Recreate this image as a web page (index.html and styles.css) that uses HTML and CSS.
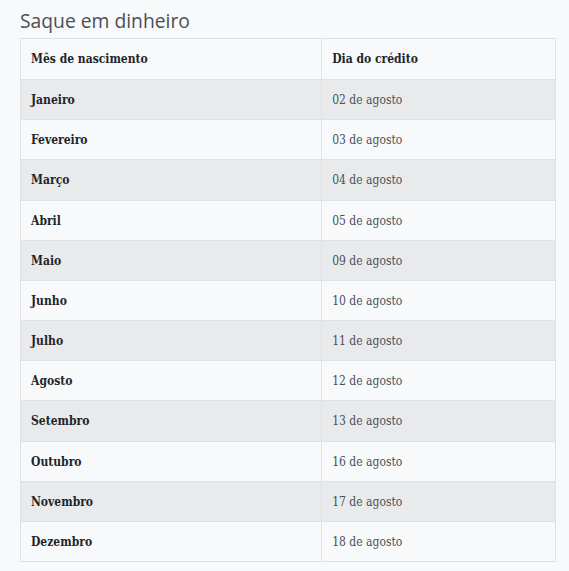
FILE: index.html
```html
<!DOCTYPE html>
<html lang="pt">
<head>
<meta charset="utf-8">
<link rel="stylesheet" href="styles.css">
</head>
<body>
<div class="page">
  <h2 class="title">Saque em dinheiro</h2>
  <table class="tbl">
    <thead>
      <tr><th class="c1">Mês de nascimento</th><th>Dia do crédito</th></tr>
    </thead>
    <tbody>
      <tr><th>Janeiro</th><td>02 de agosto</td></tr>
      <tr><th>Fevereiro</th><td>03 de agosto</td></tr>
      <tr><th>Março</th><td>04 de agosto</td></tr>
      <tr><th>Abril</th><td>05 de agosto</td></tr>
      <tr><th>Maio</th><td>09 de agosto</td></tr>
      <tr><th>Junho</th><td>10 de agosto</td></tr>
      <tr><th>Julho</th><td>11 de agosto</td></tr>
      <tr><th>Agosto</th><td>12 de agosto</td></tr>
      <tr><th>Setembro</th><td>13 de agosto</td></tr>
      <tr><th>Outubro</th><td>16 de agosto</td></tr>
      <tr><th>Novembro</th><td>17 de agosto</td></tr>
      <tr><th>Dezembro</th><td>18 de agosto</td></tr>
    </tbody>
  </table>
</div>
</body>
</html>
```
FILE: styles.css
```css
html, body {
  margin: 0;
  padding: 0;
  background: #f8f9fa;
}
.page {
  padding: 0 13px 0 20px;
}
.title {
  margin: 0;
  padding-top: 8px;
  height: 38px;
  font-family: "Open Sans", sans-serif;
  font-weight: 400;
  font-size: 19.3px;
  line-height: 26px;
  color: #495057;
  box-sizing: border-box;
}
.tbl {
  width: 100%;
  border-collapse: collapse;
  border: 1px solid #dee2e6;
  font-family: "DejaVu Serif", serif;
  font-stretch: condensed;
  font-size: 12px;
}
.tbl th, .tbl td {
  border: 1px solid #dee2e6;
  padding: 11px 10px 9px;
  line-height: 19.15px;
  text-align: left;
  vertical-align: middle;
}
.tbl thead th {
  padding: 11px 10px 10px;
}
.tbl th {
  font-weight: 700;
  color: #212529;
}
.tbl td {
  font-weight: 400;
  color: #495057;
}
.tbl .c1 {
  width: 56.3%;
}
.tbl tbody tr:nth-child(odd) {
  background: #e9eaec;
}
```
